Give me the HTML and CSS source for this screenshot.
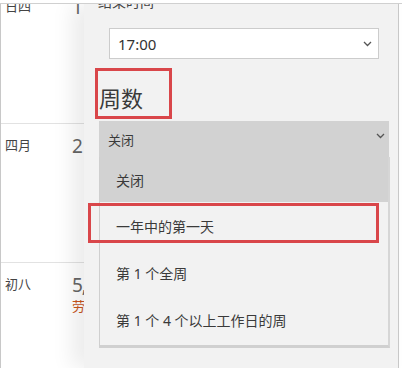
FILE: index.html
```html
<!DOCTYPE html>
<html lang="zh-CN">
<head>
<meta charset="UTF-8" />
<meta name="viewport" content="width=device-width, initial-scale=1.0" />
<title>日历选项 - 周数</title>
<link rel="stylesheet" href="styles.css">
</head>
<body>
  <div class="frame">
    <div class="cal">
      <div class="day">
        <span class="lunar">日四</span>
        <div class="numcol"><span class="num">1</span></div>
      </div>
      <div class="day">
        <span class="lunar">四月</span>
        <div class="numcol"><span class="num">2</span></div>
      </div>
      <div class="day">
        <span class="lunar">初八</span>
        <div class="numcol"><span class="num">5,</span><span class="holiday">劳</span></div>
      </div>
    </div>

    <div class="panel">
      <div class="field-label">结束时间</div>
      <div class="select time">
        <span>17:00</span>
        <svg class="chev" width="9" height="6" viewBox="0 0 9 6"><path d="M1 1l3.5 3.5L8 1" fill="none" stroke="#555" stroke-width="1.3"/></svg>
      </div>

      <h2 class="heading">周数</h2>

      <div class="dropdown">
        <div class="select open">
          <span>关闭</span>
          <svg class="chev" width="9" height="6" viewBox="0 0 9 6"><path d="M1 1l3.5 3.5L8 1" fill="none" stroke="#555" stroke-width="1.3"/></svg>
        </div>
        <ul class="listbox">
          <li class="active">关闭</li>
          <li>一年中的第一天</li>
          <li>第 1 个全周</li>
          <li>第 1 个 4 个以上工作日的周</li>
        </ul>
      </div>
    </div>

    <!-- red annotation boxes -->
    <div class="mark mark-heading"></div>
    <div class="mark mark-option"></div>
  </div>
</body>
</html>
```

FILE: styles.css
```css
* { box-sizing: border-box; }
body {
  margin: 0;
  background: #fff;
  font-family: "Noto Sans", "Noto Sans CJK SC", sans-serif;
  color: #333;
}
.frame {
  position: relative;
  margin-top: 3px;
  border-top: 1px solid #d0d0d0;
  height: 365px;
  width: 402px;
  display: flex;
  overflow: hidden;
}

/* calendar strip on the left */
.cal {
  width: 84px;
  flex: none;
  border-left: 1px solid #c8c8c8;
  overflow: hidden;
  white-space: nowrap;
}
.day {
  display: flex;
  height: 139px;
  padding: 0 0 0 4px;
  border-bottom: 1px solid #e2e2e2;
}
.day:first-child { margin-top: -19px; }
.lunar {
  width: 67px;
  flex: none;
  padding-top: 12px;
  font-size: 13px;
  line-height: 18px;
  color: #444;
}
.numcol {
  display: flex;
  flex-direction: column;
  padding-top: 10px;
}
.num {
  font-size: 19px;
  line-height: 24px;
  letter-spacing: -1px;
  color: #666;
}
.holiday {
  font-size: 13px;
  line-height: 18px;
  color: #c9561c;
}

/* options panel */
.panel {
  position: relative;
  z-index: 1;
  width: 315px;
  flex: none;
  background: #f2f2f2;
  border-right: 1px solid #c8c8c8;
  box-shadow: -12px 0 20px rgba(0,0,0,0.08);
}
.field-label {
  margin: -12px 0 0 14px;
  font-size: 14px;
  line-height: 20px;
  color: #444;
}
.select {
  display: flex;
  align-items: center;
  justify-content: space-between;
}
.select.time {
  margin: 16px 0 0 25px;
  width: 270px;
  height: 31px;
  padding: 0 6px 0 8px;
  background: #fff;
  border: 1px solid #ccc;
  font-size: 15px;
  color: #333;
}
.heading {
  margin: 24px 0 0 15px;
  font-size: 22px;
  line-height: 30px;
  font-weight: normal;
  color: #3a3a3a;
}
.dropdown {
  position: relative;
  margin: 8px 0 0 15px;
  width: 290px;
}
.select.open {
  height: 36px;
  padding: 0 4px 0 9px;
  background: #d2d2d2;
  font-size: 13px;
  color: #3a3a3a;
}
.select.open .chev { margin-top: -6px; }
.listbox {
  position: absolute;
  left: 0;
  top: 36px;
  width: 291px;
  margin: 0;
  padding: 0 0 2px;
  list-style: none;
  background: #f2f2f2;
  border-left: 1px solid #cfcfcf;
  border-right: 2px solid #d6d6d6;
  border-bottom: 3px solid #d0d0d0;
}
.listbox li {
  height: 47px;
  padding-left: 16px;
  display: flex;
  align-items: center;
  font-size: 14px;
  color: #3a3a3a;
}
.listbox li.active {
  height: 45px;
  background: #d2d2d2;
}

/* annotation boxes drawn over the screenshot */
.mark {
  position: absolute;
  z-index: 5;
  border: 3px solid #d9464a;
}
.mark-heading {
  left: 95px;
  top: 64px;
  width: 77px;
  height: 51px;
}
.mark-option {
  left: 88px;
  top: 199px;
  width: 291px;
  height: 40px;
}
```
